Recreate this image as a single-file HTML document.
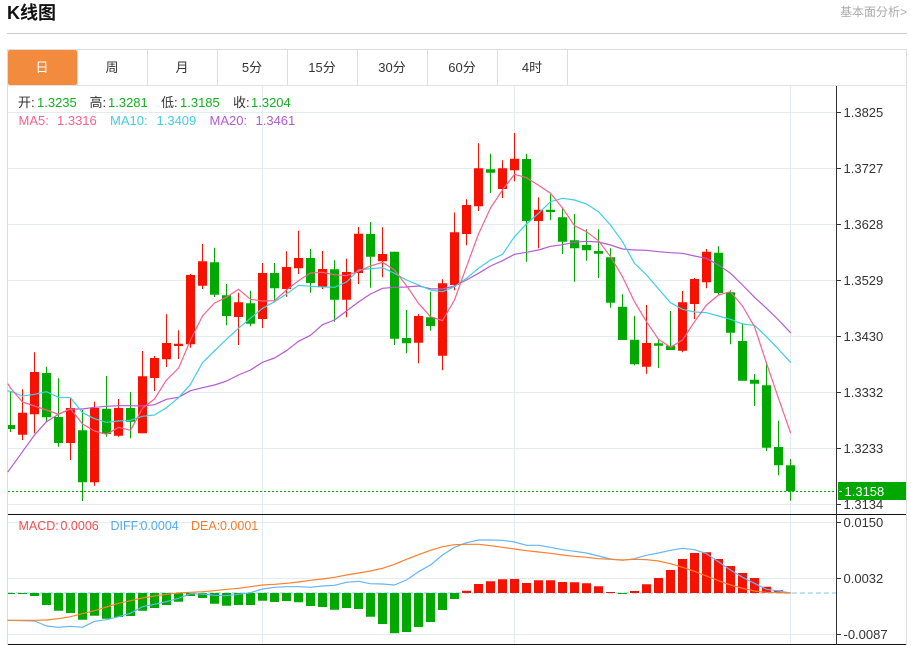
<!DOCTYPE html>
<html lang="zh">
<head>
<meta charset="utf-8">
<title>K线图</title>
<style>
html,body{margin:0;padding:0;background:#fff;width:911px;height:645px;overflow:hidden}
svg{display:block;position:absolute;left:0;top:0}
text{font-family:"Liberation Sans","Noto Sans CJK SC",sans-serif;font-size:13px}
.ax{fill:#333}
.tab{fill:#333;font-size:13px;text-anchor:middle}
.m{font-size:12.5px}
.ln{fill:none;stroke-width:1.2;stroke-linejoin:round;stroke-linecap:round}
</style>
</head>
<body>
<svg width="911" height="645" viewBox="0 0 911 645" xmlns="http://www.w3.org/2000/svg">
<rect width="911" height="645" fill="#fff"/>
<!-- header -->
<text x="7" y="19" style="font-size:18px;font-weight:bold" fill="#111">K线图</text>
<text x="840" y="16" style="font-size:12px" fill="#aaa">基本面分析&gt;</text>
<rect x="7" y="33" width="900" height="1" fill="#ccc"/>
<!-- frame -->
<rect x="7" y="49" width="900" height="1" fill="#ddd"/>
<rect x="7" y="85" width="900" height="1" fill="#e2e2e2"/>
<rect x="7" y="49" width="1" height="596" fill="#ddd"/>
<rect x="906" y="49" width="1" height="596" fill="#ddd"/>
<!-- tabs -->
<rect x="8" y="50" width="69" height="35" rx="2" fill="#f38b3f"/>
<path d="M147.5 50V85M217.5 50V85M287.5 50V85M357.5 50V85M427.5 50V85M497.5 50V85M567.5 50V85M77.5 50V85" stroke="#ddd" fill="none"/>
<text class="tab" x="42" y="72" style="fill:#fff">日</text>
<text class="tab" x="112" y="72">周</text>
<text class="tab" x="182" y="72">月</text>
<text class="tab" x="252" y="72">5分</text>
<text class="tab" x="322" y="72">15分</text>
<text class="tab" x="392" y="72">30分</text>
<text class="tab" x="462" y="72">60分</text>
<text class="tab" x="532" y="72">4时</text>
<!-- grid -->
<path d="M8 112.5H836M8 168.5H836M8 224.5H836M8 280.5H836M8 336.5H836M8 392.5H836M8 448.5H836M8 504.5H836M8 522.5H836M8 578.5H836M8 634.5H836M262.5 86V644M514.5 86V644M790.5 86V644" stroke="#e3ecf2" fill="none"/>
<!-- candles red -->
<path fill="none" stroke="#f51200" d="M22.5 389.3V440M34.5 352.3V433.3M70.5 398V460M94.5 401.7V485.7M118.5 399V436.7M142.5 351V433.3M154.5 356V391M166.5 314.3V367M178.5 330.3V359M190.5 274V347.7M202.5 244V289M238.5 292.7V345M262.5 263V328M286.5 251.3V296.7M298.5 230.7V274M322.5 251V289M346.5 258.7V317.3M358.5 227V284M382.5 227.3V277.3M418.5 314V363.3M442.5 279.3V370.3M454.5 212.5V290.3M466.5 199.3V245.3M478.5 143.3V211M502.5 160.3V198M514.5 133V181.3M538.5 197.3V248.3M646.5 305V373.7M682.5 291V352.3M694.5 278V319M706.5 249V288.3"/>
<path fill="#f51200" d="M18 412.7h9V434.7h-9zM30 372h9V414.3h-9zM66 408h9V443h-9zM90 408h9V482.3h-9zM114 408h9V435.7h-9zM138 376.3h9V433.3h-9zM150 358h9V378h-9zM162 343h9V359.3h-9zM174 343.7h9V346h-9zM186 275h9V344.3h-9zM198 261.3h9V285.7h-9zM234 302.3h9V317h-9zM258 273h9V319h-9zM282 267h9V289h-9zM294 258h9V268.3h-9zM318 269h9V287.3h-9zM342 272h9V299.7h-9zM354 233.7h9V273h-9zM378 254h9V261.3h-9zM414 316h9V342.7h-9zM438 283.3h9V355.7h-9zM450 232.3h9V285h-9zM462 205h9V234h-9zM474 168.3h9V206.3h-9zM498 168.3h9V189h-9zM510 158.7h9V170.3h-9zM534 209.7h9V221h-9zM642 343h9V366.7h-9zM678 302.3h9V350.7h-9zM690 279h9V304h-9zM702 251.7h9V282.3h-9z"/>
<!-- candles green -->
<path fill="none" stroke="#00a800" d="M10.5 391.7V432M46.5 366.7V422.3M58.5 378.3V446.7M82.5 410V501M106.5 376V436.7M130.5 392V438.3M214.5 247.7V297M226.5 284V325.3M250.5 290.7V326.3M274.5 263V301M310.5 249V292.7M334.5 260.3V321.7M370.5 222V287.7M394.5 251.7V345M406.5 310V353.3M430.5 291.7V330.7M490.5 153.7V193M526.5 153.7V261.7M550.5 194.3V220.3M562.5 208.3V254M574.5 214V281.7M586.5 229.3V260.7M598.5 229.3V278M610.5 248.3V307.7M622.5 294.3V340M634.5 315.7V365.3M658.5 338.7V368M670.5 311V350M718.5 246.3V295M730.5 290.3V344.3M742.5 323.3V380.7M754.5 374V406M766.5 361.7V451M778.5 420.7V475.3M790.5 459V500.7"/>
<path fill="#00a800" d="M8 425h7V429h-7zM42 373h9V417.3h-9zM54 417h9V443h-9zM78 430.3h9V482.3h-9zM102 408.7h9V434h-9zM126 408h9V421.7h-9zM210 262.3h9V294.7h-9zM222 295.3h9V316h-9zM246 303.3h9V323.7h-9zM270 273h9V288.3h-9zM306 258h9V283h-9zM330 269.3h9V299.7h-9zM366 234h9V256.7h-9zM390 251.7h9V338.7h-9zM402 338h9V343.3h-9zM426 317.3h9V326h-9zM486 169.3h9V172.7h-9zM522 159h9V221h-9zM546 209.7h9V212h-9zM558 217.3h9V241.7h-9zM570 240.3h9V248.3h-9zM582 245h9V250.3h-9zM594 251h9V253.7h-9zM606 257.3h9V302.7h-9zM618 306.7h9V340h-9zM630 339.7h9V364.3h-9zM654 343.3h9V345.7h-9zM666 345.7h9V350h-9zM714 252.7h9V293h-9zM726 292.3h9V332.7h-9zM738 341h9V380.7h-9zM750 379.7h9V383.7h-9zM762 385.3h9V447.7h-9zM774 447h9V465.3h-9zM786 465.3h9V491.3h-9z"/>
<!-- last price dotted -->
<path d="M8 491.5H836" stroke="#00a800" stroke-dasharray="2 2" fill="none"/>
<!-- MA lines -->
<polyline class="ln" stroke="#b45bd0" points="8,471.7 10.5,468.3 22.5,451.7 34.5,435 46.5,421.7 58.5,414.3 70.5,409 82.5,409 94.5,407.3 106.5,406.3 118.5,405.7 130.5,405.7 142.5,406 154.5,404.7 166.5,399.3 178.5,397.3 190.5,390.7 202.5,387.7 214.5,385 226.5,381 238.5,375 250.5,370 262.5,362.3 274.5,358 286.5,350.7 298.5,341.3 310.5,335.3 322.5,324.7 334.5,320 346.5,311 358.5,302 370.5,294 382.5,288.3 394.5,287.3 406.5,287 418.5,286 430.5,288.7 442.5,289 454.5,286 466.5,280 478.5,273.3 490.5,266 502.5,260.7 514.5,254.3 526.5,252.3 538.5,250 550.5,246.3 562.5,244.7 574.5,242.3 586.5,241.3 598.5,242 610.5,245 622.5,249 634.5,250 646.5,250.3 658.5,251.7 670.5,252.7 682.5,253.3 694.5,256 706.5,258.3 718.5,265 730.5,273.3 742.5,285 754.5,297.3 766.5,308.3 778.5,320 790.5,332.7"/>
<polyline class="ln" stroke="#3fcfe3" points="8,391 10.5,391.3 22.5,396 34.5,394.3 46.5,391.7 58.5,397.3 70.5,397.7 82.5,412.7 94.5,418.7 106.5,422.3 118.5,421 130.5,420.3 142.5,416.3 154.5,415 166.5,407.7 178.5,397.7 190.5,384.3 202.5,362.7 214.5,350.7 226.5,339.3 238.5,328.3 250.5,318.3 262.5,308.3 274.5,301.7 286.5,294 298.5,285.3 310.5,286.3 322.5,287 334.5,287.3 346.5,282 358.5,270 370.5,268.7 382.5,267.7 394.5,273.3 406.5,280 418.5,285 430.5,290 442.5,291.7 454.5,286.7 466.5,278.3 478.5,268.3 490.5,260 502.5,254.3 514.5,236.7 526.5,224 538.5,213.3 550.5,201.7 562.5,198.3 574.5,200 586.5,204 598.5,211.7 610.5,225 622.5,241.7 634.5,263.3 646.5,275 658.5,289 670.5,302.7 682.5,309.3 694.5,312 706.5,312.7 718.5,316 730.5,319.3 742.5,324 754.5,325.3 766.5,336.7 778.5,349.3 790.5,362.3"/>
<polyline class="ln" stroke="#f5628e" points="8,384 10.5,388 22.5,402 34.5,406 46.5,410 58.5,414.3 70.5,408.7 82.5,424 94.5,431 106.5,434.3 118.5,427.3 130.5,430.3 142.5,408.3 154.5,399 166.5,380 178.5,368.3 190.5,340 202.5,316 214.5,303 226.5,297.3 238.5,289.3 250.5,299.3 262.5,301 274.5,300.7 286.5,290 298.5,280.7 310.5,273 322.5,272.3 334.5,274.7 346.5,275.7 358.5,271.3 370.5,266 382.5,262.3 394.5,270 406.5,285.7 418.5,303.3 430.5,316.7 442.5,320.7 454.5,300 466.5,266.7 478.5,234 490.5,208 502.5,190 514.5,174.3 526.5,177.7 538.5,185.3 550.5,193.3 562.5,208 574.5,225.7 586.5,231.7 598.5,240.7 610.5,256.7 622.5,276.7 634.5,301.7 646.5,321.7 658.5,339.3 670.5,347.3 682.5,340 694.5,321.7 706.5,305 718.5,295 730.5,291.7 742.5,306 754.5,326.7 766.5,363.3 778.5,398.3 790.5,432.7"/>
<!-- info text -->
<text x="18" y="107" fill="#333">开:</text><text x="37" y="107" fill="#12b020">1.3235</text>
<text x="89.5" y="107" fill="#333">高:</text><text x="108" y="107" fill="#12b020">1.3281</text>
<text x="161" y="107" fill="#333">低:</text><text x="180" y="107" fill="#12b020">1.3185</text>
<text x="233" y="107" fill="#333">收:</text><text x="251" y="107" fill="#12b020">1.3204</text>
<text x="18.5" y="125" fill="#f5628e">MA5:</text><text x="57" y="125" fill="#f5628e">1.3316</text>
<text x="110" y="125" fill="#3fcfe3">MA10:</text><text x="156.5" y="125" fill="#3fcfe3">1.3409</text>
<text x="209.5" y="125" fill="#b45bd0">MA20:</text><text x="255.5" y="125" fill="#b45bd0">1.3461</text>
<!-- MACD zero line -->
<path d="M8 593H836" stroke="#bfe4f5" stroke-width="2" stroke-dasharray="5 3" fill="none"/>
<!-- MACD bars -->
<path fill="#00a800" d="M8 593h7v1h-7zM18 593h9v1h-9zM30 593h9v3h-9zM42 593h9v12h-9zM54 593h9v17.7h-9zM66 593h9v20h-9zM78 593h9v26.7h-9zM90 593h9v22.7h-9zM102 593h9v25.7h-9zM114 593h9v24h-9zM126 593h9v23h-9zM138 593h9v17.7h-9zM150 593h9v15h-9zM162 593h9v12h-9zM174 593h9v8.7h-9zM186 593h9v3h-9zM198 593h9v5h-9zM210 593h9v10.7h-9zM222 593h9v12.7h-9zM234 593h9v12h-9zM246 593h9v12h-9zM258 593h9v7.7h-9zM270 593h9v9h-9zM282 593h9v8h-9zM294 593h9v9.3h-9zM306 593h9v13h-9zM318 593h9v14h-9zM330 593h9v16.7h-9zM342 593h9v15h-9zM354 593h9v16h-9zM366 593h9v23.7h-9zM378 593h9v31h-9zM390 593h9v40.3h-9zM402 593h9v39h-9zM414 593h9v34h-9zM426 593h9v29h-9zM438 593h9v17h-9zM450 593h9v6h-9zM618 593h9v1h-9z"/>
<path fill="#f51200" d="M462 590.7h9V593h-9zM474 584h9V593h-9zM486 581.3h9V593h-9zM498 579.3h9V593h-9zM510 579h9V593h-9zM522 583h9V593h-9zM534 580.3h9V593h-9zM546 580.3h9V593h-9zM558 582h9V593h-9zM570 582.3h9V593h-9zM582 583.3h9V593h-9zM594 586.3h9V593h-9zM606 592h9v1h-9zM630 591h9v2h-9zM642 584.3h9V593h-9zM654 578h9V593h-9zM666 570h9V593h-9zM678 559h9V593h-9zM690 553h9V593h-9zM702 552.3h9V593h-9zM714 559h9V593h-9zM726 566h9V593h-9zM738 573h9V593h-9zM750 578h9V593h-9zM762 586.7h9V593h-9zM774 590.3h9V593h-9z"/>
<!-- MACD lines -->
<polyline class="ln" stroke="#66b5f5" points="8,620.3 34.5,621 46.5,626 58.5,627.3 70.5,626.3 82.5,627.3 94.5,621.3 106.5,619.7 118.5,616.7 130.5,613.3 142.5,606.7 154.5,604.3 166.5,601.7 178.5,598.3 190.5,593.7 202.5,594 214.5,595.3 226.5,595.7 238.5,594.3 250.5,592.7 262.5,589 274.5,587.3 286.5,586.7 298.5,586.7 310.5,587.3 322.5,586 334.5,585.3 346.5,582.3 358.5,581.3 370.5,583.7 382.5,584 394.5,585 406.5,580 418.5,571.7 430.5,565 442.5,555 454.5,547.3 466.5,542.7 478.5,540 490.5,540 502.5,540.3 514.5,542 526.5,545.3 538.5,545.3 550.5,547.3 562.5,549.7 574.5,551.3 586.5,553 598.5,556 610.5,559 622.5,560.3 634.5,558.7 646.5,555.3 658.5,553 670.5,550.3 682.5,548.3 694.5,549.7 706.5,553.7 718.5,561.7 730.5,570 742.5,577.3 754.5,583.3 766.5,589.3 778.5,591 790.5,593"/>
<polyline class="ln" stroke="#ff7f2a" points="8,620.3 34.5,620.3 46.5,620 58.5,618.7 70.5,616.7 82.5,613.7 94.5,610.7 106.5,607 118.5,603.3 130.5,600.7 142.5,598 154.5,596 166.5,594.3 178.5,593 190.5,592.3 202.5,591.7 214.5,590.7 226.5,589.3 238.5,588.3 250.5,586.7 262.5,585 274.5,584.3 286.5,583.3 298.5,582 310.5,580.3 322.5,579 334.5,577.3 346.5,575 358.5,573 370.5,571 382.5,568.3 394.5,564.3 406.5,559.3 418.5,554.7 430.5,550.3 442.5,546.7 454.5,544.7 466.5,544.3 478.5,544.3 490.5,545.7 502.5,547.3 514.5,549 526.5,550.7 538.5,552 550.5,553.3 562.5,555 574.5,556.3 586.5,557.3 598.5,558.7 610.5,559.3 622.5,560 634.5,559.3 646.5,559.7 658.5,561 670.5,563.7 682.5,567.3 694.5,571.3 706.5,576 718.5,580.7 730.5,585 742.5,588.3 754.5,591 766.5,592.3 778.5,592.7 790.5,593"/>
<!-- MACD labels -->
<text class="m" x="18.5" y="530" fill="#f05050">MACD:</text><text class="m" x="60.5" y="530" fill="#f05050">0.0006</text>
<text class="m" x="110.5" y="530" fill="#55aaee">DIFF:</text><text class="m" x="140.5" y="530" fill="#55aaee">0.0004</text>
<text class="m" x="191" y="530" fill="#f57b2b">DEA:</text><text class="m" x="220" y="530" fill="#f57b2b">0.0001</text>
<!-- axes -->
<rect x="8" y="514" width="898" height="1" fill="#111"/>
<rect x="8" y="644" width="898" height="1" fill="#111"/>
<rect x="836" y="86" width="1" height="559" fill="#333"/>
<path d="M837 112.5h4M837 168.5h4M837 224.5h4M837 280.5h4M837 336.5h4M837 392.5h4M837 448.5h4M837 504.5h4M837 522.5h4M837 578.5h4M837 634.5h4" stroke="#333" fill="none"/>
<text class="ax" x="843.5" y="117">1.3825</text>
<text class="ax" x="843.5" y="173">1.3727</text>
<text class="ax" x="843.5" y="229">1.3628</text>
<text class="ax" x="843.5" y="285">1.3529</text>
<text class="ax" x="843.5" y="341">1.3430</text>
<text class="ax" x="843.5" y="397">1.3332</text>
<text class="ax" x="843.5" y="453">1.3233</text>
<text class="ax" x="843.5" y="509">1.3134</text>
<text class="ax" x="843.5" y="527">0.0150</text>
<text class="ax" x="843.5" y="583">0.0032</text>
<text class="ax" x="843.5" y="639">-0.0087</text>
<!-- price tag -->
<rect x="838" y="482" width="68" height="18" fill="#00a800"/>
<path d="M839 491.5h3" stroke="#fff" fill="none"/>
<text x="844.5" y="496" fill="#fff">1.3158</text>
</svg>
</body>
</html>
